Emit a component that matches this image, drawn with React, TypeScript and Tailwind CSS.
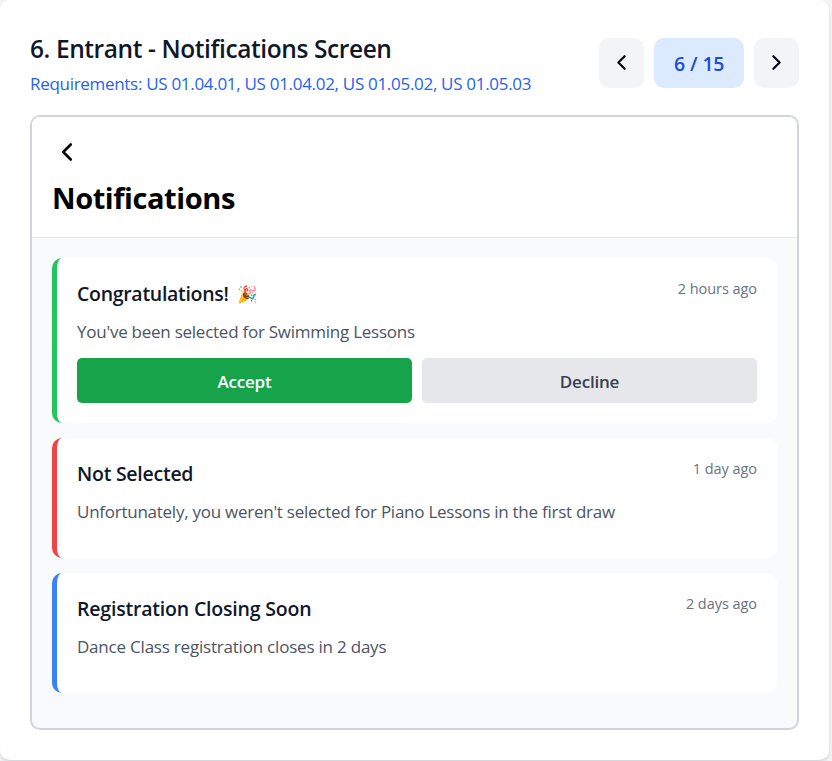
import type { ReactNode } from "react";

function Chevron({ dir, className }: { dir: "left" | "right"; className: string }) {
  return (
    <svg
      viewBox="0 0 24 24"
      className={className}
      fill="none"
      stroke="currentColor"
      strokeWidth="2.1"
      strokeLinecap="round"
      strokeLinejoin="round"
    >
      <path d={dir === "left" ? "m15 18-6-6 6-6" : "m9 18 6-6-6-6"} />
    </svg>
  );
}

type CardProps = {
  accent: string;
  title: ReactNode;
  time: string;
  body: string;
  bodySpacing: string;
  children?: ReactNode;
};

function Card({ accent, title, time, body, bodySpacing, children }: CardProps) {
  return (
    <article className={`rounded-[10px] border-l-[5px] bg-white p-5 ${accent}`}>
      <div className="flex items-start justify-between">
        <h3 className="mt-[1px] flex h-[30px] items-center text-[19.5px] font-semibold text-gray-900">
          {title}
        </h3>
        <span className="mt-[1px] h-[20px] text-[14.5px] leading-[20px] tracking-[-0.05px] text-[#6b7280]">{time}</span>
      </div>
      <p className={`mt-[10px] h-[25px] text-[17px] leading-[25px] text-[#4b5563] ${bodySpacing}`}>{body}</p>
      {children ?? <div className="h-[14px]" />}
    </article>
  );
}

export default function App() {
  return (
    <div className="h-[761px] overflow-hidden bg-[#f3f4f6] font-['Open_Sans','Noto_Sans',sans-serif] whitespace-nowrap">
      <main className="h-[760px] w-[829px] rounded-[10px] bg-white px-[30px] pt-[30px] shadow-md">
        <header className="flex h-[85px] justify-between">
          <div>
            <h1 className="mt-[1px] h-[35px] text-[24.5px] leading-[35px] font-semibold tracking-[-0.4px] text-gray-900">
              6. Entrant - Notifications Screen
            </h1>
            <p className="mt-[5px] h-[25px] text-[17px] leading-[25px] tracking-[-0.3px] text-[#2563eb]">
              Requirements: US 01.04.01, US 01.04.02, US 01.05.02, US 01.05.03
            </p>
          </div>
          <nav className="flex gap-[10px] pt-[8px]">
            <button className="flex h-[50px] w-[45px] items-center justify-center rounded-[10px] bg-gray-100 pb-[1px] text-gray-950">
              <Chevron dir="left" className="size-[25px]" />
            </button>
            <span className="flex h-[50px] w-[90px] items-center justify-center rounded-[10px] bg-[#dbeafe] pt-[2px] text-[19.5px] font-semibold tracking-[-0.5px] [word-spacing:0.8px] text-[#1d4ed8]">
              6 / 15
            </span>
            <button className="flex h-[50px] w-[45px] items-center justify-center rounded-[10px] bg-gray-100 pb-[1px] text-gray-950">
              <Chevron dir="right" className="size-[25px]" />
            </button>
          </nav>
        </header>

        <section className="h-[615px] overflow-hidden rounded-[10px] border-2 border-[#d1d5db] bg-[#f9fafb]">
          <div className="h-[121px] border-b border-[#e5e7eb] bg-white px-5 pt-5">
            <Chevron dir="left" className="size-[30px] text-gray-950" />
            <h2 className="mt-[12px] text-[29px] leading-[38px] font-bold tracking-[-0.42px] text-black">
              Notifications
            </h2>
          </div>
          <div className="flex flex-col gap-[15px] p-5">
            <Card
              accent="border-[#22c55e]"
              title={
                <>
                  <span className="tracking-[-0.3px]">Congratulations!</span>
                  <span className="ml-[8px] text-[16.5px]">🎉</span>
                </>
              }
              time="2 hours ago"
              body="You've been selected for Swimming Lessons"
              bodySpacing="tracking-[-0.25px]"
            >
              <div className="mt-[14px] grid grid-cols-2 gap-[10px] text-[17px] font-semibold tracking-[-0.2px]">
                <button className="h-[45px] rounded-[5px] bg-[#16a34a] pt-[2px] text-white">Accept</button>
                <button className="h-[45px] rounded-[5px] bg-[#e5e7eb] pt-[2px] text-[#374151]">Decline</button>
              </div>
            </Card>
            <Card
              accent="border-[#ef4444]"
              title={<span className="tracking-[-0.26px]">Not Selected</span>}
              time="1 day ago"
              body="Unfortunately, you weren't selected for Piano Lessons in the first draw"
              bodySpacing="tracking-[-0.255px]"
            />
            <Card
              accent="border-[#3b82f6]"
              title={<span className="tracking-[-0.19px]">Registration Closing Soon</span>}
              time="2 days ago"
              body="Dance Class registration closes in 2 days"
              bodySpacing="tracking-[-0.21px]"
            />
          </div>
        </section>
      </main>
    </div>
  );
}
